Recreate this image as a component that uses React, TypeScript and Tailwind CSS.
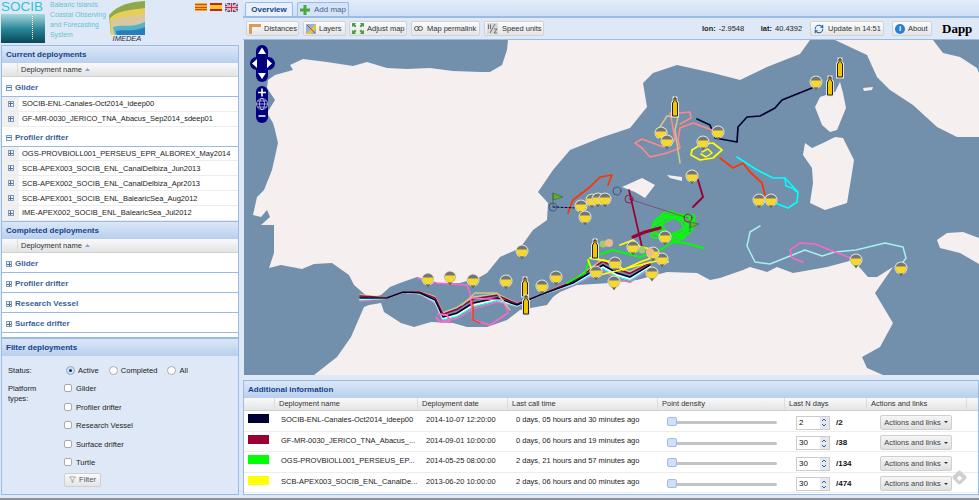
import { Funnel, RefreshCw } from "lucide-react"

const gliders = ["SOCIB-ENL-Canales-Oct2014_ideep00", "GF-MR-0030_JERICO_TNA_Abacus_Sep2014_sdeep01"]
const drifters = [
  "OGS-PROVBIOLL001_PERSEUS_EPR_ALBOREX_May2014",
  "SCB-APEX003_SOCIB_ENL_CanalDelbiza_Jun2013",
  "SCB-APEX002_SOCIB_ENL_CanalDelbiza_Apr2013",
  "SCB-APEX001_SOCIB_ENL_BalearicSea_Aug2012",
  "IME-APEX002_SOCIB_ENL_BalearicSea_Jul2012",
]
const platforms = ["Glider", "Profiler drifter", "Research Vessel", "Surface drifter", "Turtle"]

const info = [
  { color: "bg-[#000033]", name: "SOCIB-ENL-Canales-Oct2014_ideep00", date: "2014-10-07 12:20:00", call: "0 days, 05 hours and 30 minutes ago", days: "2", total: "/2" },
  { color: "bg-[#990033]", name: "GF-MR-0030_JERICO_TNA_Abacus_...", date: "2014-09-01 10:00:00", call: "0 days, 06 hours and 19 minutes ago", days: "30", total: "/38" },
  { color: "bg-[#00ff00]", name: "OGS-PROVBIOLL001_PERSEUS_EP...", date: "2014-05-25 08:00:00", call: "2 days, 21 hours and 57 minutes ago", days: "30", total: "/134" },
  { color: "bg-[#ffff00]", name: "SCB-APEX003_SOCIB_ENL_CanalDe...", date: "2013-06-20 10:00:00", call: "2 days, 06 hours and 00 minutes ago", days: "30", total: "/474" },
]

// land, in page pixels (the svg viewBox starts at the map corner)
const europe =
  "508,40 507,50 502,65 490,72 480,72 453,71 430,68 407,69 387,68 367,62 353,66 327,62 303,59 290,65 293,70 275,75 268,80 267,88 275,100 267,113 273,123 275,130 278,143 272,170 264,190 257,197 253,215 261,217 267,210 270,217 261,225 274,225 274,253 269,268 281,265 302,269 314,264 332,263 349,275 354,285 369,298 381,295 390,287 400,283 417,277 437,283 460,283 480,277 487,273 500,257 520,248 533,230 547,220 548,203 538,192 553,170 570,150 600,138 630,128 647,107 643,83 653,73 677,65 713,73 740,80 767,67 800,54 810,40"
const italy = "835,40 933,40 943,53 960,57 977,68 979,73 979,137 957,137 937,127 913,105 890,90 877,77 867,55"
const africa =
  "314,375 337,357 351,337 364,307 369,305 381,303 384,312 401,323 414,327 431,322 453,323 467,327 487,327 507,320 520,310 547,305 553,297 560,292 577,285 610,283 637,280 667,272 697,273 710,280 720,278 743,270 750,267 767,272 777,267 793,273 827,267 853,260 868,277 877,277 893,267 875,293 893,323 880,347 862,357 867,368 883,375"
const islands = [
  "840,82 843,93 846,108 837,130 830,132 822,125 815,107 820,97 835,92",
  "805,143 803,155 812,168 813,183 810,203 825,210 847,203 852,173 854,160 843,138 835,137 823,143 812,148",
  "937,240 947,233 963,232 979,238 979,264 960,253 940,248",
  "622,187 642,178 655,185 645,198 635,192",
  "667,175 682,177 682,181 670,178",
  "863,88 873,87 872,90 864,91",
]

const alboran = "360,298 387,298 403,292 420,293 435,300 443,317 457,313 473,303 497,298 517,305 540,295 573,283 603,265 617,273 630,277 650,265"
const shift = (pts: string, dy: number) =>
  pts
    .split(" ")
    .map((p) => {
      const [x, y] = p.split(",").map(Number)
      return `${x},${y + dy * (1 + Math.sin(x / 23))}`
    })
    .join(" ")

const bundle = [
  { c: "#ff3300", dy: 2.5 },
  { c: "#ff66cc", dy: 3 },
  { c: "#c8c890", dy: -3 },
  { c: "#ffff00", dy: 1.5 },
  { c: "#00ffff", dy: 2 },
  { c: "#990033", dy: -2 },
  { c: "#ffffff", dy: 1 },
  { c: "#000033", dy: 0 },
]

const tracks = [
  { c: "#000033", w: 1.7, p: "697,119 710,125 715,138 737,142 738,127 747,117 760,116 775,108 782,100 812,88" },
  { c: "#ff8888", w: 1.6, p: "712,130 693,123 680,128 678,140 680,148 667,153 650,157 642,148 635,143 642,139 650,142 663,147 675,140 672,122 670,113 680,113 690,112 691,118 680,124" },
  { c: "#c8c890", w: 1.6, p: "680,163 678,150 675,130 678,117 667,116 658,130 664,138" },
  { c: "#ff3300", w: 1.7, p: "720,158 733,168 743,163 750,172 762,183 765,195" },
  { c: "#00ffff", w: 1.6, p: "737,157 757,170 773,178 785,178 798,192 797,202 788,208 775,203" },
  { c: "#00ffff", w: 1.6, p: "785,178 786,186 792,188 797,192" },
  { c: "#990033", w: 1.9, p: "698,180 703,197 693,207" },
  { c: "#ff3300", w: 1.7, p: "608,185 612,175 600,177 590,187 573,200 568,213" },
  { c: "#990033", w: 1.7, p: "629,190 642,247" },
  { c: "#990033", w: 3.2, p: "633,237 645,232 660,228" },
  { c: "#00ff00", w: 2, p: "703,248 685,243 673,242 660,250 640,257 613,250 590,258 585,273 567,283" },
  { c: "#ffff00", w: 1.8, p: "590,258 617,263 623,270 640,262 660,255 668,262" },
  { c: "#ffff00", w: 1.8, p: "620,245 633,240 640,247 655,250 662,258" },
  { c: "#ffff00", w: 1.7, p: "692,150 700,145 713,143 722,150 713,158 700,160 691,155 692,150" },
  { c: "#ffff00", w: 1.5, p: "702,152 708,149 712,153 706,157 701,154" },
  { c: "#ff66cc", w: 1.6, p: "418,278 437,283 467,285 470,293 473,320 490,325 508,313 503,300 473,298" },
  { c: "#ff3300", w: 1.3, p: "473,300 473,320 480,323" },
  { c: "#c8c890", w: 1.4, p: "462,305 475,293 497,293 510,310" },
  { c: "#ff66cc", w: 1.8, p: "436,317 440,322 450,321 447,315 438,314" },
  { c: "#aaeeee", w: 1.5, p: "760,226 750,232 747,246 755,262 770,264 785,258 795,254 805,250 822,256 835,252 856,250 885,243 903,247 906,258 901,265" },
  { c: "#ff66cc", w: 1.5, p: "803,262 792,258 790,250 800,243 815,244 830,250 856,260" },
  { c: "#ffff00", w: 1.7, p: "588,260 592,270 600,275 620,270 640,265 652,262 662,260" },
]

const greenLoops = [
  { rx: 20, ry: 12, r: 0 },
  { rx: 18, ry: 9, r: 15 },
  { rx: 22, ry: 9, r: -12 },
  { rx: 12, ry: 8, r: 30 },
  { rx: 16, ry: 12, r: 50 },
  { rx: 24, ry: 7, r: -25 },
]

const pins = [
  [816, 82], [718, 132], [703, 142], [661, 133], [667, 141], [692, 176], [759, 200], [771, 200], [856, 260], [901, 268],
  [581, 206], [592, 200], [598, 199], [605, 199], [585, 217], [522, 251], [428, 279], [450, 277], [473, 280], [506, 281],
  [542, 286], [556, 277], [596, 272], [614, 282], [652, 273], [665, 237], [633, 247], [662, 259], [653, 253], [615, 263],
]
const towers = [[840, 68], [830, 86], [675, 107], [595, 249], [525, 287], [526, 305]]

function Toggle({ open }: { open?: boolean }) {
  return (
    <span className="flex h-[6px] w-[6px] shrink-0 items-center justify-center border border-[#7f9db9] bg-[#eef3fa] text-[6px] leading-none text-[#4d6f99]">
      <span className="relative block h-[4px] w-[4px]">
        <span className="absolute left-0 top-[1.5px] h-px w-[4px] bg-[#4d6f99]" />
        {!open && <span className="absolute left-[1.5px] top-0 h-[4px] w-px bg-[#4d6f99]" />}
      </span>
    </span>
  )
}

function PanelHeader({ title }: { title: string }) {
  return (
    <div className="flex h-[17px] shrink-0 items-center bg-gradient-to-b from-[#dce7f6] to-[#b8cfee] pl-[4px] text-[8px] font-bold text-[#15428b]">
      {title}
    </div>
  )
}

function NameHeader() {
  return (
    <div className="flex h-[14px] shrink-0 border-b border-[#d0d0d0] bg-gradient-to-b from-[#f9f9f9] to-[#e3e4e6] text-[7.5px] text-[#333]">
      <div className="w-[16px] border-r border-[#dcdcdc]" />
      <div className="flex items-center gap-[3px] pl-[3px]">
        Deployment name
        <svg width="5" height="3" viewBox="0 0 5 3">
          <path d="M0 3 L2.5 0 L5 3Z" fill="#7fa3d4" />
        </svg>
      </div>
    </div>
  )
}

function Group({ label, open }: { label: string; open?: boolean }) {
  return (
    <div className="flex h-[20px] items-center gap-[3px] border-b border-[#99bbe8] pl-[4px] pt-[3px] text-[8px] font-bold text-[#3a5f9a]">
      <Toggle open={open} />
      {label}
    </div>
  )
}

function DeployRow({ name }: { name: string }) {
  return (
    <div className="flex h-[15px] items-center border-b border-[#ededed] text-[7.5px] text-[#222]">
      <div className="flex h-full w-[17px] shrink-0 items-center justify-center bg-[#f0f0f0]">
        <Toggle />
      </div>
      <span className="pl-[3px]">{name}</span>
    </div>
  )
}

function ToolButton({ icon, label, className }: { icon: React.ReactNode; label: string; className: string }) {
  return (
    <div className={`flex h-[15px] items-center gap-[3px] rounded-[2px] border border-[#d2d2d2] bg-gradient-to-b from-[#fbfbfb] to-[#e4e5e7] pl-[2px] text-[7.5px] text-[#333] ${className}`}>
      {icon}
      {label}
    </div>
  )
}

function Pin({ x, y }: { x: number; y: number }) {
  return (
    <g transform={`translate(${x} ${y})`}>
      <circle r="6.5" fill="#e2e2e2" />
      <path d="M-3 4 L0 8.5 L3 4Z" fill="#666" />
      <circle r="5.5" fill="#757575" />
      <path d="M-5.3 -1.5 A5.5 5.5 0 1 0 5.3 -1.5Z" fill="#f5d92e" />
    </g>
  )
}

function Tower({ x, y }: { x: number; y: number }) {
  const d = "M-2.5 9 L-2.5 -4 L-1 -6 L-1 -9 L1 -9 L1 -6 L2.5 -4 L2.5 9Z"
  return (
    <g transform={`translate(${x} ${y})`}>
      <path d={d} fill="none" stroke="#e4e4e4" strokeWidth="3" />
      <path d={d} fill="#f2c500" stroke="#222" strokeWidth="1" />
    </g>
  )
}

function MapView() {
  return (
    <svg width="735" height="335" viewBox="244 40 735 335" className="block">
      <rect x="244" y="40" width="735" height="335" fill="#7290ab" />
      <polygon points={europe} fill="#f6eff0" />
      <polygon points={italy} fill="#f6eff0" />
      <polygon points={africa} fill="#f6eff0" />
      {islands.map((p) => (
        <polygon key={p} points={p} fill="#f6eff0" />
      ))}

      <g fill="none" strokeLinejoin="round" strokeLinecap="round">
        {bundle.map((b) => (
          <polyline key={b.c} points={shift(alboran, b.dy)} stroke={b.c} strokeWidth="1.5" />
        ))}
        {greenLoops.map((l) => (
          <ellipse key={l.r} cx="673" cy="226" rx={l.rx} ry={l.ry} stroke="#00ff00" strokeWidth="1.7" transform={`rotate(${l.r} 673 226)`} />
        ))}
        {tracks.map((t) => (
          <polyline key={t.p} points={t.p} stroke={t.c} strokeWidth={t.w} />
        ))}
        <path d="M553 207 L578 208" stroke="#000033" strokeWidth="1" strokeDasharray="2 2" />
        <path d="M629 199 L688 218" stroke="#990033" strokeWidth="0.5" strokeDasharray="2 1" />
        <circle cx="553" cy="207" r="4" stroke="#334477" strokeWidth="0.8" />
        <circle cx="617" cy="191" r="4" stroke="#334477" strokeWidth="0.8" />
        <circle cx="629" cy="199" r="4" stroke="#990033" strokeWidth="0.8" />
        <circle cx="688" cy="218" r="4" stroke="#990033" strokeWidth="0.8" />
      </g>

      {pins.map(([x, y]) => (
        <Pin key={`${x}-${y}`} x={x} y={y} />
      ))}
      {towers.map(([x, y]) => (
        <Tower key={`${x}-${y}`} x={x} y={y} />
      ))}

      <path d="M553 193 L553 207 M553 193 L563 197 L553 200Z" fill="#66aa33" stroke="#336622" strokeWidth="0.6" />
      <path d="M690 222 L690 232 M690 222 L699 224 L690 228Z" fill="#66aa33" stroke="#336622" strokeWidth="0.6" />
      <circle cx="603" cy="244" r="3.5" fill="#9ccf6a" />
      <circle cx="609" cy="243" r="4" fill="#f0b98c" />
      <circle cx="642" cy="250" r="3.5" fill="#9ccf6a" />
      <circle cx="650" cy="252" r="4" fill="#f0b98c" />

      {/* pan and zoom controls */}
      <rect x="256" y="45" width="12" height="37" rx="6" fill="#00007f" />
      <rect x="250" y="57" width="25" height="13" rx="6.5" fill="#00007f" />
      <g fill="#fff">
        <path d="M262 47.5 L266 54 L258 54Z" />
        <path d="M262 79 L266 73 L258 73Z" />
        <path d="M252 63.5 L257 59 L257 68Z" />
        <path d="M272 63.5 L267 59 L267 68Z" />
      </g>
      <rect x="256" y="86" width="12" height="37" rx="6" fill="#00007f" />
      <path d="M258 92.5 H266 M262 88.5 V96.5 M258.5 116 H265.5" stroke="#fff" strokeWidth="1.6" />
      <g fill="none" stroke="#fff" strokeWidth="0.6">
        <circle cx="262" cy="104" r="5.5" />
        <ellipse cx="262" cy="104" rx="2.5" ry="5.5" />
        <path d="M256.5 104 H267.5 M257.5 101 H266.5 M257.5 107 H266.5" />
      </g>
    </svg>
  )
}

function LogoBlock() {
  return (
    <div className="flex h-[45px] shrink-0">
      <div className="relative flex h-[43px] w-[44px] shrink-0 flex-col">
        <div className="h-[14px] text-[13.5px] leading-[14px] text-[#2fc4d2]">SOCIB</div>
        <div className="flex-1 bg-gradient-to-b from-[#a5d8dc] via-[#2a8a9c] to-[#0b4658]" />
        <span className="absolute bottom-[4px] left-[31px] top-[16px] border-l border-dotted border-white" />
      </div>
      <div className="w-[62px] shrink-0 whitespace-nowrap pl-[5px] text-[6.8px] leading-[10px] text-[#62c6d2]">
        Balearic Islands
        <br />
        Coastal Observing
        <br />
        and Forecasting
        <br />
        System
      </div>
      <div className="flex w-[40px] shrink-0 flex-col items-center">
        <svg width="36" height="35" viewBox="0 0 36 35">
          <path d="M0 15 C10 4 22 2 36 1 L36 35 L2 35Z" fill="#8ea84a" />
          <path d="M1 18 C10 10 22 10 36 8 L36 35 L2 35Z" fill="#e5cf5c" />
          <path d="M2 21 C12 15 24 18 36 14 L36 35 L4 35Z" fill="#d9c7a0" />
          <path d="M4 27 C14 24 24 28 36 22 L36 35 L6 35Z" fill="#53b4c9" />
          <path d="M7 31 C16 29 26 32 36 27 L36 35 L8 35Z" fill="#2a7dbb" />
        </svg>
        <span className="text-[7.5px] italic leading-[8px] text-[#1d2b3a]">IMEDEA</span>
      </div>
      <div className="flex gap-[3px] pl-[48px] pt-[3px]">
        <div className="flex h-[8px] w-[12px] flex-col justify-between bg-[#f0b020] py-px">
          <span className="h-px bg-[#d8481c]" />
          <span className="h-px bg-[#d8481c]" />
          <span className="h-px bg-[#d8481c]" />
        </div>
        <div className="flex h-[8px] w-[12px] flex-col">
          <span className="h-[2px] bg-[#c8201c]" />
          <span className="h-[4px] bg-[#f8cc20]" />
          <span className="h-[2px] bg-[#c8201c]" />
        </div>
        <svg width="13" height="9" viewBox="0 0 13 9">
          <rect width="13" height="9" fill="#3a4a8c" />
          <path d="M0 0 L13 9 M13 0 L0 9" stroke="#fff" strokeWidth="1.6" />
          <path d="M0 0 L13 9 M13 0 L0 9" stroke="#c8303c" strokeWidth="0.5" />
          <path d="M6.5 0 V9 M0 4.5 H13" stroke="#fff" strokeWidth="2.6" />
          <path d="M6.5 0 V9 M0 4.5 H13" stroke="#c8303c" strokeWidth="1.4" />
        </svg>
      </div>
    </div>
  )
}

function Sidebar() {
  return (
    <div className="flex w-[243px] shrink-0 flex-col pl-px pr-[4px]">
      <LogoBlock />

      <div className="flex h-[176px] shrink-0 flex-col overflow-hidden border-x border-t border-[#99bbe8] bg-white">
        <PanelHeader title="Current deployments" />
        <NameHeader />
        <Group label="Glider" open />
        {gliders.map((g) => (
          <DeployRow key={g} name={g} />
        ))}
        <Group label="Profiler drifter" open />
        {drifters.map((d) => (
          <DeployRow key={d} name={d} />
        ))}
      </div>

      <div className="flex h-[117px] shrink-0 flex-col overflow-hidden border border-[#99bbe8] bg-white">
        <PanelHeader title="Completed deployments" />
        <NameHeader />
        <Group label="Glider" />
        <Group label="Profiler drifter" />
        <Group label="Research Vessel" />
        <Group label="Surface drifter" />
      </div>

      <div className="flex h-[157px] shrink-0 flex-col border border-[#99bbe8] bg-[#dfe8f6]">
        <PanelHeader title="Filter deployments" />
        <div className="flex pl-[6px] pt-[10px] text-[7.6px] leading-[10px] text-[#222]">
          <div className="w-[56px] shrink-0">
            <div className="h-[18px]">Status:</div>
            <div>
              Platform
              <br />
              types:
            </div>
          </div>
          <div className="flex flex-col">
            <div className="flex h-[18px] items-start">
              <span className="ml-[2px] flex h-[9px] w-[9px] items-center justify-center rounded-full border border-[#8fa8d0] bg-[#cfe0f7]">
                <span className="h-[3px] w-[3px] rounded-full bg-[#1a2b50]" />
              </span>
              <span className="ml-[3px]">Active</span>
              <span className="ml-[10px] h-[9px] w-[9px] rounded-full border border-[#aaa] bg-white" />
              <span className="ml-[3px]">Completed</span>
              <span className="ml-[10px] h-[9px] w-[9px] rounded-full border border-[#aaa] bg-white" />
              <span className="ml-[3px]">All</span>
            </div>
            {platforms.map((p) => (
              <div key={p} className="flex h-[18.5px] items-start gap-[4px]">
                <span className="h-[8px] w-[8px] rounded-[2px] border border-[#aaa] bg-white" />
                {p}
              </div>
            ))}
            <div className="-mt-[4px] flex h-[14px] w-[37px] items-center justify-center gap-[3px] rounded-[2px] border border-[#cfcfcf] bg-gradient-to-b from-[#fafafa] to-[#e4e5e7] text-[#555]">
              <Funnel size={7} strokeWidth={1.5} />
              Filter
            </div>
          </div>
        </div>
      </div>
    </div>
  )
}

function Toolbar() {
  return (
    <div className="flex h-[22px] shrink-0 items-center border-b border-[#99bbe8] bg-[#dfe8f6] pl-[3px]">
      <ToolButton
        className="w-[53px]"
        label="Distances"
        icon={
          <svg width="12" height="10" viewBox="0 0 12 10">
            <path d="M0 0 H12 V3 H3 V10 H0Z" fill="#d99a5b" />
          </svg>
        }
      />
      <ToolButton
        className="ml-[4px] w-[43px]"
        label="Layers"
        icon={
          <svg width="10" height="10" viewBox="0 0 10 10">
            <rect width="10" height="10" fill="#8fb4e0" />
            <path d="M0 10 L10 0 V5 L5 10Z" fill="#e7c23a" />
            <path d="M1 1 L9 9" stroke="#d0402a" strokeWidth="1" />
          </svg>
        }
      />
      <ToolButton
        className="ml-[3px] w-[58px]"
        label="Adjust map"
        icon={
          <svg width="12" height="11" viewBox="0 0 12 11" fill="#4d9a4a">
            <path d="M0 0 H4 L3 1.5 L4.5 3 L3 4.5 L1.5 3 L0 4Z" />
            <path d="M12 0 H8 L9 1.5 L7.5 3 L9 4.5 L10.5 3 L12 4Z" />
            <path d="M0 11 H4 L3 9.5 L4.5 8 L3 6.5 L1.5 8 L0 7Z" />
            <path d="M12 11 H8 L9 9.5 L7.5 8 L9 6.5 L10.5 8 L12 7Z" />
          </svg>
        }
      />
      <ToolButton
        className="ml-[4px] w-[69px] gap-[4px]"
        label="Map permalink"
        icon={
          <svg width="9" height="5" viewBox="0 0 9 5" fill="none" stroke="#555" strokeWidth="1">
            <rect x="0.5" y="0.5" width="4.5" height="4" rx="2" />
            <rect x="4" y="0.5" width="4.5" height="4" rx="2" />
          </svg>
        }
      />
      <ToolButton
        className="ml-[4px] w-[60px] gap-[4px]"
        label="Speed units"
        icon={
          <svg width="11" height="11" viewBox="0 0 11 11" fill="none" stroke="#666" strokeWidth="0.9">
            <rect width="11" height="11" fill="#d8d8d8" stroke="none" />
            <path d="M1.5 1.5 V6 M3.5 1.5 V6 M8 1 L3 10 M7 6 H10 L7 10 H10" />
          </svg>
        }
      />
      <div className="ml-[158px] flex w-[108px] text-[7.5px] text-[#222]">
        <span className="font-bold">lon:</span>
        <span className="ml-[3px] w-[42px]">-2.9548</span>
        <span className="font-bold">lat:</span>
        <span className="ml-[3px]">40.4392</span>
      </div>
      <ToolButton
        className="ml-0 w-[74px] gap-[4px] pl-[3px]"
        label="Update in 14:51"
        icon={<RefreshCw size={10} strokeWidth={2.5} className="text-[#1d5fc4]" />}
      />
      <ToolButton
        className="ml-[8px] w-[40px] gap-[3px]"
        label="About"
        icon={
          <span className="flex h-[10px] w-[10px] items-center justify-center rounded-full bg-[#2a7fd4] text-[8px] font-bold leading-none text-white">
            i
          </span>
        }
      />
      <span className="ml-[10px] font-['Liberation_Serif',serif] text-[13px] font-bold text-black">Dapp</span>
    </div>
  )
}

function InfoPanel() {
  const cols = "grid grid-cols-[31px_143px_90px_150px_127px_82px_100px_1fr]"
  return (
    <div className="flex h-[115px] shrink-0 flex-col border border-[#99bbe8] bg-white">
      <PanelHeader title="Additional information" />
      <div className={`${cols} h-[13px] shrink-0 border-b border-[#d0d0d0] bg-gradient-to-b from-[#f9f9f9] to-[#e3e4e6] text-[7.5px] leading-[12px] text-[#333]`}>
        <div className="border-r border-[#dcdcdc]" />
        {["Deployment name", "Deployment date", "Last call time", "Point density", "Last N days", "Actions and links"].map((h) => (
          <div key={h} className="border-r border-[#dcdcdc] pl-[4px]">
            {h}
          </div>
        ))}
        <div />
      </div>
      {info.map((r) => (
        <div key={r.name} className={`${cols} h-[20.5px] border-b border-[#ededed] text-[7.5px] text-[#222]`}>
          <div className="pl-[4px] pt-[3px]">
            <div className={`h-[9px] w-[21px] ${r.color}`} />
          </div>
          <div className="pl-[6px] pt-[3px]">{r.name}</div>
          <div className="pl-[8px] pt-[3px]">{r.date}</div>
          <div className="whitespace-nowrap pl-[8px] pt-[3px]">{r.call}</div>
          <div className="relative flex items-center pl-[9px] pt-[4px]">
            <div className="h-[3px] w-[110px] rounded-full bg-[#c4c4c4]" />
            <div className="absolute left-[9px] top-[6px] h-[9px] w-[10px] rounded-[2px] border border-[#9fbde6] bg-[#cfe0f7]" />
          </div>
          <div className="flex items-center pl-[11px] pt-[4px]">
            <div className="flex h-[14px] w-[34px] items-center border border-[#ccc] bg-white">
              <span className="w-[24px] pl-[2px] text-[8px] text-[#111]">{r.days}</span>
              <span className="flex h-full w-[10px] flex-col items-center justify-center bg-[#e6e8ec] text-[#2f5fa8]">
                <svg width="6" height="9" viewBox="0 0 6 9" fill="none" stroke="currentColor" strokeWidth="1">
                  <path d="M1 3 L3 1 L5 3 M1 6 L3 8 L5 6" />
                </svg>
              </span>
            </div>
            <span className="ml-[6px] text-[8px] font-bold text-[#111]">{r.total}</span>
          </div>
          <div className="flex items-center pl-[13px] pt-[3px]">
            <div className="flex h-[15px] w-[72px] items-center justify-center gap-[3px] rounded-[2px] border border-[#cfcfcf] bg-gradient-to-b from-[#f6f6f6] to-[#dfe0e2] text-[#444]">
              Actions and links
              <svg width="4" height="2" viewBox="0 0 4 2">
                <path d="M0 0 H4 L2 2Z" fill="#333" />
              </svg>
            </div>
          </div>
          <div />
        </div>
      ))}
    </div>
  )
}

export default function App() {
  return (
    <div className="relative flex h-[500px] w-[979px] overflow-hidden border-b-2 border-[#8b929a] bg-[#dfe8f6] font-['Liberation_Sans',Arial,sans-serif]">
      <Sidebar />

      <div className="flex min-w-0 flex-1 flex-col">
        <div className="flex h-[16px] shrink-0 items-end gap-[4px] bg-gradient-to-b from-[#e4ecf8] to-[#cedff5] pl-[2px] text-[8px]">
          <div className="flex h-[14px] w-[48px] items-center justify-center rounded-t-[2px] border border-b-0 border-[#99bbe8] bg-[#e8f0fb] font-bold text-[#15428b]">
            Overview
          </div>
          <div className="flex h-[14px] w-[52px] items-center justify-center gap-[4px] rounded-t-[2px] border border-b-0 border-[#99bbe8] bg-[#d5e3f6] text-[#3f6299]">
            <svg width="10" height="10" viewBox="0 0 10 10">
              <path d="M3.5 0 H6.5 V3.5 H10 V6.5 H6.5 V10 H3.5 V6.5 H0 V3.5 H3.5Z" fill="#4ba83f" />
            </svg>
            Add map
          </div>
        </div>
        <div className="h-[2px] shrink-0 border-y border-[#99bbe8] bg-white" />
        <Toolbar />
        <div className="h-[335px] shrink-0 pl-px">
          <MapView />
        </div>
        <div className="h-[5px] shrink-0" />
        <InfoPanel />
      </div>

      <div className="absolute left-[954px] top-[472px] flex h-[11px] w-[11px] rotate-45 items-center justify-center rounded-[2px] bg-[#cfcfcf]">
        <span className="h-[4px] w-[4px] bg-white" />
      </div>
    </div>
  )
}
